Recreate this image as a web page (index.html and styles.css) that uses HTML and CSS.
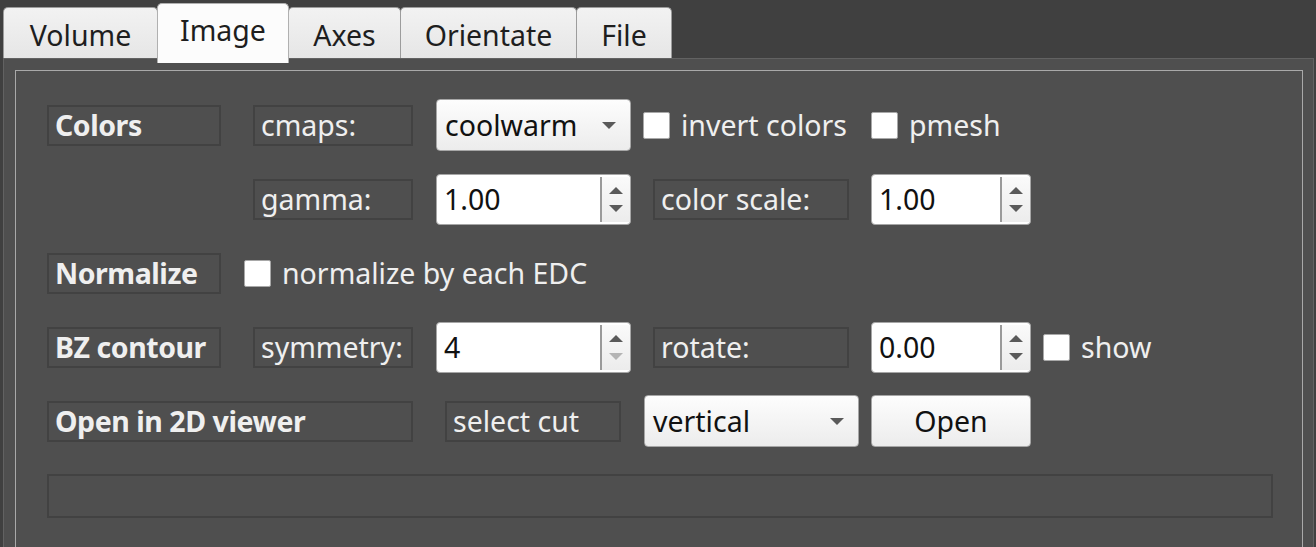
FILE: index.html
```html
<!DOCTYPE html>
<html>
<head>
<meta charset="utf-8">
<link rel="stylesheet" href="styles.css">
</head>
<body>
<div class="window">
  <div class="tabbar">
    <div class="tab t-volume">Volume</div>
    <div class="tab t-image active">Image</div>
    <div class="tab t-axes">Axes</div>
    <div class="tab t-orient">Orientate</div>
    <div class="tab t-file">File</div>
  </div>
  <div class="pane">
    <div class="group">
      <div class="row">
        <div class="lbl head w-head">Colors</div>
        <div class="lbl w-sub ml-32">cmaps:</div>
        <div class="combo w-combo ml-23"><span class="ctext">coolwarm</span><span class="caret"></span></div>
        <div class="check w-check1 ml-12"><span class="box"></span><span class="ctext2">invert colors</span></div>
        <div class="check"><span class="box"></span><span class="ctext2">pmesh</span></div>
      </div>
      <div class="row">
        <div class="spacer w-head"></div>
        <div class="lbl w-sub ml-32">gamma:</div>
        <div class="spin w-combo ml-23"><span class="stext">1.00</span><span class="sbtn"><span class="up"></span><span class="dn"></span></span></div>
        <div class="lbl w-lbl2 ml-22">color scale:</div>
        <div class="spin w-spin ml-22"><span class="stext">1.00</span><span class="sbtn"><span class="up"></span><span class="dn"></span></span></div>
      </div>
      <div class="row">
        <div class="lbl head w-head">Normalize</div>
        <div class="check ml-23"><span class="box"></span><span class="ctext2">normalize by each EDC</span></div>
      </div>
      <div class="row">
        <div class="lbl head w-head">BZ contour</div>
        <div class="lbl w-sub ml-32">symmetry:</div>
        <div class="spin w-combo ml-23"><span class="stext">4</span><span class="sbtn"><span class="up"></span><span class="dn disabled"></span></span></div>
        <div class="lbl w-lbl2 ml-22">rotate:</div>
        <div class="spin w-spin ml-22"><span class="stext">0.00</span><span class="sbtn"><span class="up"></span><span class="dn"></span></span></div>
        <div class="check ml-12"><span class="box"></span><span class="ctext2">show</span></div>
      </div>
      <div class="row">
        <div class="lbl head w-wide">Open in 2D viewer</div>
        <div class="lbl w-cut ml-32">select cut</div>
        <div class="combo w-combo2 ml-23"><span class="ctext">vertical</span><span class="caret"></span></div>
        <div class="button w-spin ml-12">Open</div>
      </div>
      <div class="status"></div>
    </div>
  </div>
</div>
</body>
</html>
```

FILE: styles.css
```css
* { box-sizing: border-box; }
html, body {
  margin: 0;
  padding: 0;
  background: #404040;
  width: 1316px;
  height: 547px;
  overflow: hidden;
}
body {
  font-family: "Noto Sans", "Open Sans", sans-serif;
  font-size: 28.5px;
  color: #efefef;
}
.window {
  display: flex;
  flex-direction: column;
  height: 547px;
}
.tabbar {
  display: flex;
  align-items: flex-end;
  height: 58px;
  padding-left: 3px;
  flex: none;
}
.tab {
  height: 51px;
  border: 1px solid #9c9c9c;
  border-bottom: none;
  border-radius: 5px 5px 0 0;
  background: linear-gradient(#f2f2f2, #e6e6e6);
  color: #1e1e1e;
  display: flex;
  align-items: center;
  justify-content: center;
  padding-top: 4px;
  margin-right: -1px;
}
.tab.active {
  height: 60px;
  margin-bottom: -5px;
  background: #fcfcfc;
  border-color: #b0b0b0;
  position: relative;
  z-index: 2;
  padding-top: 0;
  padding-bottom: 8px;
}
.t-volume { width: 155px; }
.t-image { width: 132px; }
.t-axes { width: 113px; }
.t-orient { width: 177px; }
.t-file { width: 96px; }

.pane {
  flex: 1;
  margin: 0 2px 0 3px;
  border: 1px solid #626262;
  border-bottom: none;
  background: #4f4f4f;
  padding: 11px 10px 0 11px;
  position: relative;
  z-index: 1;
}
.group {
  border: 1px solid #a9a9a9;
  border-bottom: none;
  height: 100%;
  padding: 28px 0 0 31px;
  display: flex;
  flex-direction: column;
  gap: 22px;
}
.row {
  display: flex;
  align-items: center;
  height: 52px;
}
.lbl {
  height: 41px;
  border: 2px solid #424242;
  display: flex;
  align-items: center;
  padding-left: 6px;
  padding-bottom: 1px;
  white-space: nowrap;
}
.lbl.head { font-weight: 700; letter-spacing: -0.45px; }
.w-head { width: 174px; }
.w-sub { width: 160px; }
.w-lbl2 { width: 196px; }
.w-wide { width: 366px; }
.w-cut { width: 176px; }
.w-combo { width: 195px; }
.w-combo2 { width: 215px; }
.w-spin { width: 160px; }
.w-check1 { width: 228px; }
.spacer { flex: none; }
.ml-32 { margin-left: 32px; }
.ml-23 { margin-left: 23px; }
.ml-22 { margin-left: 22px; }
.ml-12 { margin-left: 12px; }

.combo, .button {
  height: 52px;
  border: 1px solid #a6a6a6;
  border-radius: 4px;
  background: linear-gradient(#fdfdfd, #ececec);
  color: #111;
  display: flex;
  align-items: center;
  position: relative;
}
.combo { padding-left: 8px; }
.button { justify-content: center; }
.caret {
  position: absolute;
  right: 14px;
  top: 22px;
  width: 0;
  height: 0;
  border-left: 7px solid transparent;
  border-right: 7px solid transparent;
  border-top: 7px solid #5a5a5a;
}
.check {
  display: flex;
  align-items: center;
  white-space: nowrap;
}
.box {
  width: 27px;
  height: 27px;
  background: #fff;
  border: 1px solid #a8a8a8;
  border-radius: 2px;
  margin-right: 11px;
  flex: none;
}
.spin {
  height: 51px;
  border: 1px solid #a6a6a6;
  border-radius: 4px;
  background: #fff;
  color: #111;
  display: flex;
  align-items: stretch;
  overflow: hidden;
}
.stext {
  flex: 1;
  display: flex;
  align-items: center;
  padding-left: 7px;
  padding-bottom: 1px;
}
.sbtn {
  width: 30px;
  border-left: 2px solid #9a9a9a;
  background: linear-gradient(#fafafa, #ececec);
  display: flex;
  flex-direction: column;
  align-items: center;
  justify-content: center;
  gap: 11px;
  margin: 2px 0;
}
.up, .dn {
  width: 0;
  height: 0;
  border-left: 7px solid transparent;
  border-right: 7px solid transparent;
}
.up { border-bottom: 7px solid #5a5a5a; }
.dn { border-top: 7px solid #5a5a5a; }
.dn.disabled { border-top-color: #b4b4b4; }
.status {
  width: 1226px;
  height: 44px;
  border: 2px solid #424242;
  margin-top: 5px;
}
```
